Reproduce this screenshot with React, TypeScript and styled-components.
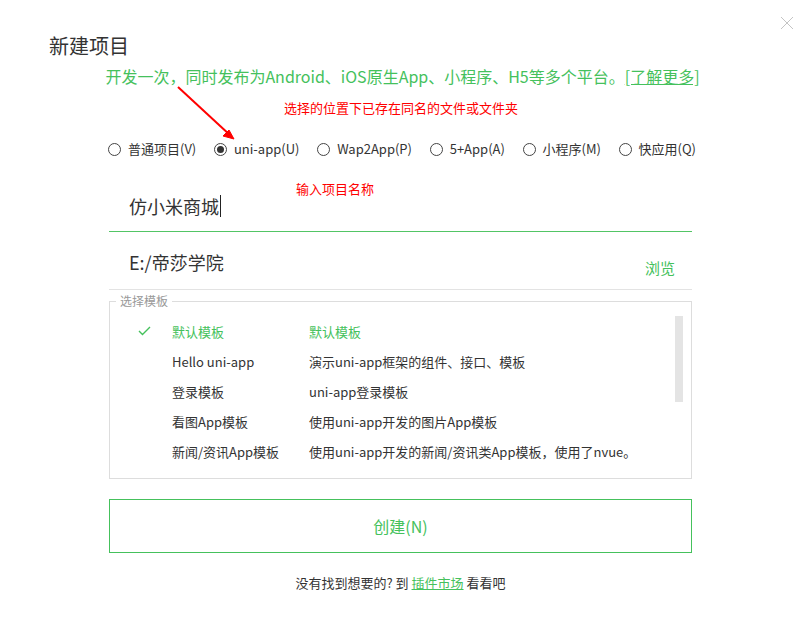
import React from "react";
import styled, { createGlobalStyle } from "styled-components";

const GREEN = "#45c15c";

const radios = [
  { label: "普通项目(V)", checked: false },
  { label: "uni-app(U)", checked: true },
  { label: "Wap2App(P)", checked: false },
  { label: "5+App(A)", checked: false },
  { label: "小程序(M)", checked: false },
  { label: "快应用(Q)", checked: false },
];

const templates = [
  { name: "默认模板", desc: "默认模板", active: true },
  { name: "Hello uni-app", desc: "演示uni-app框架的组件、接口、模板", active: false },
  { name: "登录模板", desc: "uni-app登录模板", active: false },
  { name: "看图App模板", desc: "使用uni-app开发的图片App模板", active: false },
  { name: "新闻/资讯App模板", desc: "使用uni-app开发的新闻/资讯类App模板，使用了nvue。", active: false },
];

//====////==== COMPONENTE ====\\\\====\\
const App = () => {
  return (
    <>
      <Global />
      <Dialog>
        <Close>
          <svg width="14" height="14" viewBox="0 0 14 14">
            <path d="M1 1L13 13M13 1L1 13" stroke="#c4c4c4" strokeWidth="1" fill="none" />
          </svg>
        </Close>
        <Title>新建项目</Title>
        <Subtitle>
          开发一次，同时发布为Android、iOS原生App、小程序、H5等多个平台。<Link>[了解更多]</Link>
        </Subtitle>
        <Note $top={99} $left={284} $size={13}>选择的位置下已存在同名的文件或文件夹</Note>
        <Note $top={180} $left={296} $size={13}>输入项目名称</Note>
        <Arrow width="70" height="70" viewBox="0 0 70 70">
          <path d="M2 2L55 51" stroke="#f00" strokeWidth="2" fill="none" />
          <path d="M58 54L47 51L53 45Z" fill="#f00" stroke="#f00" strokeWidth="1" />
        </Arrow>
        <Form>
          <RadioRow>
            {radios.map((r) => (
              <RadioItem key={r.label}>
                <Circle $checked={r.checked} />
                {r.label}
              </RadioItem>
            ))}
          </RadioRow>
          <Field $line="#52c565">
            <FieldText>
              仿小米商城<Caret />
            </FieldText>
          </Field>
          <Field $line="#e3e3e3">
            <FieldText>E:/帝莎学院</FieldText>
            <Browse>浏览</Browse>
          </Field>
          <Group>
            <Legend>选择模板</Legend>
            <List>
              {templates.map((t) => (
                <Row key={t.name} $active={t.active}>
                  <Check>
                    {t.active && (
                      <svg width="13" height="10" viewBox="0 0 13 10">
                        <path d="M1 5L4.5 8.5L12 1" stroke={GREEN} strokeWidth="1.4" fill="none" />
                      </svg>
                    )}
                  </Check>
                  <span>{t.name}</span>
                  <span>{t.desc}</span>
                </Row>
              ))}
              <Thumb />
            </List>
          </Group>
          <CreateButton>创建(N)</CreateButton>
          <Footer>
            没有找到想要的? 到 <Link>插件市场</Link> 看看吧
          </Footer>
        </Form>
      </Dialog>
    </>
  );
};

//====////==== ESTILOS ====\\\\====\\
const Global = createGlobalStyle`
  body {
    margin: 0;
    background: #fff;
    font-family: "Noto Sans CJK SC", "Noto Sans", sans-serif;
    color: #333;
  }
`;

const Dialog = styled.div`
  position: relative;
  width: 803px;
  height: 624px;
  overflow: hidden;
  padding-top: 32px;
  box-sizing: border-box;
`;

const Close = styled.div`
  position: absolute;
  top: 11px;
  right: 9px;
  width: 14px;
  height: 14px;
`;

const Title = styled.h1`
  margin: 0 0 0 49px;
  font-size: 20px;
  font-weight: normal;
  line-height: 28px;
  color: #333;
`;

const Subtitle = styled.div`
  margin-top: 4px;
  text-align: center;
  font-size: 16px;
  line-height: 24px;
  color: ${GREEN};
  white-space: nowrap;
  padding-left: 2px;
`;

const Link = styled.span`
  color: ${GREEN};
  text-decoration: underline;
`;

const Note = styled.div<{ $top: number; $left: number; $size: number }>`
  position: absolute;
  top: ${(p) => p.$top}px;
  left: ${(p) => p.$left}px;
  font-size: ${(p) => p.$size}px;
  line-height: 18px;
  color: #f00;
`;

const Arrow = styled.svg`
  position: absolute;
  top: 85px;
  left: 176px;
`;

const Form = styled.div`
  width: 583px;
  margin: 51px 0 0 109px;
  display: flex;
  flex-direction: column;
`;

const RadioRow = styled.div`
  display: flex;
  justify-content: space-between;
  width: 588px;
  margin: 0 0 17px -1px;
  height: 20px;
  white-space: nowrap;
`;

const RadioItem = styled.label`
  display: flex;
  align-items: center;
  gap: 7px;
  font-size: 13px;
  line-height: 20px;
  color: #333;
`;

const Circle = styled.span<{ $checked: boolean }>`
  width: 11px;
  height: 11px;
  border: 1px solid #444;
  border-radius: 50%;
  position: relative;
  &::after {
    content: "";
    display: ${(p) => (p.$checked ? "block" : "none")};
    position: absolute;
    inset: 2px;
    border-radius: 50%;
    background: #333;
  }
`;

const Field = styled.div<{ $line: string }>`
  display: flex;
  justify-content: space-between;
  align-items: flex-start;
  padding: 16px 17px 11px 20px;
  border-bottom: 1px solid ${(p) => p.$line};
`;

const FieldText = styled.div`
  font-size: 18px;
  line-height: 28px;
  color: #333;
  display: flex;
  align-items: center;
`;

const Caret = styled.span`
  width: 1px;
  height: 22px;
  background: #222;
  margin-left: 1px;
`;

const Browse = styled.div`
  margin-top: 10px;
  font-size: 15px;
  line-height: 20px;
  color: ${GREEN};
`;

const Group = styled.fieldset`
  margin: 3px 0 0;
  padding: 0;
  min-width: 0;
  border: 1px solid #ddd;
`;

const Legend = styled.legend`
  margin-left: 6px;
  padding: 0 4px;
  font-size: 12px;
  line-height: 16px;
  color: #999;
`;

const List = styled.div`
  position: relative;
  padding: 7px 0 12px;
`;

const Row = styled.div<{ $active: boolean }>`
  display: grid;
  grid-template-columns: 62px 137px 1fr;
  align-items: center;
  height: 30px;
  font-size: 13px;
  color: ${(p) => (p.$active ? GREEN : "#333")};
  white-space: nowrap;
`;

const Check = styled.span`
  display: flex;
  padding-left: 28px;
`;

const Thumb = styled.div`
  position: absolute;
  top: 7px;
  right: 8px;
  width: 8px;
  height: 86px;
  background: #e4e4e4;
`;

const CreateButton = styled.button`
  margin-top: 20px;
  height: 54px;
  border: 1px solid ${GREEN};
  background: #fff;
  font-family: inherit;
  font-size: 16px;
  color: ${GREEN};
`;

const Footer = styled.div`
  margin-top: 20px;
  text-align: center;
  font-size: 13px;
  line-height: 20px;
  color: #333;
`;

export default App;
